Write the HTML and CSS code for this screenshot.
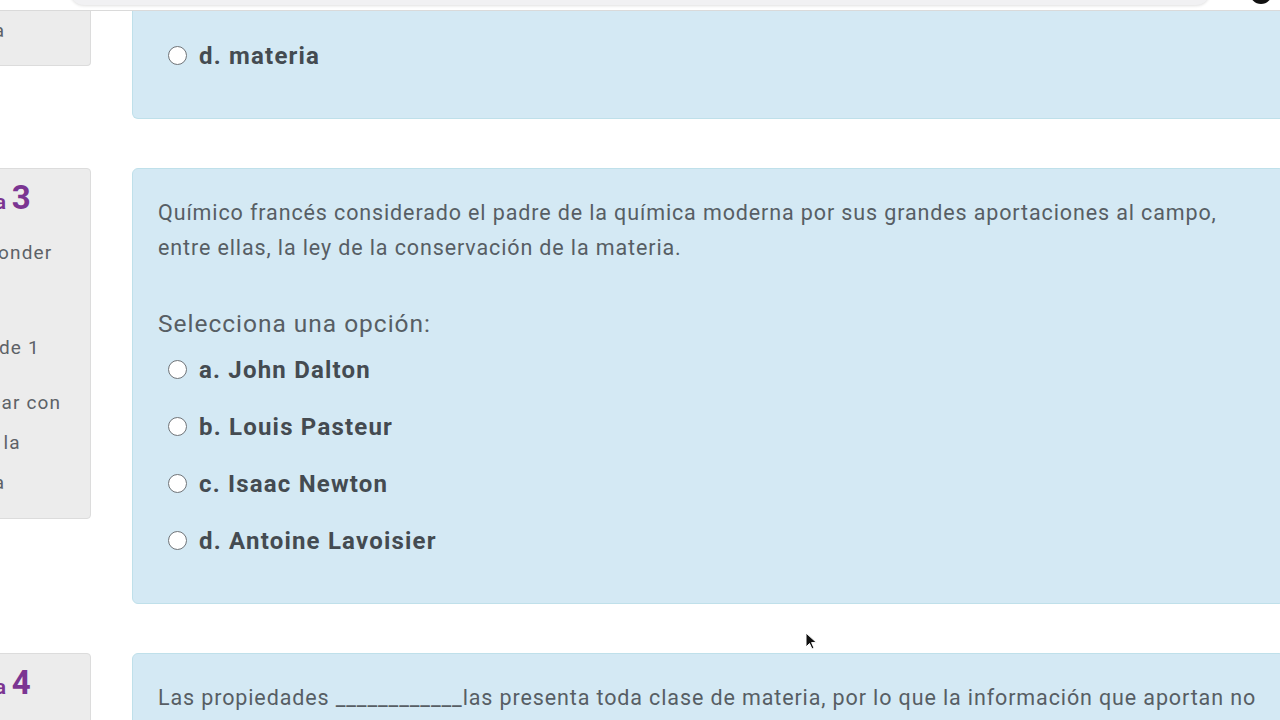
FILE: index.html
```html
<!DOCTYPE html>
<html>
<head>
  <title>Cuestionario</title>
  <link rel="stylesheet" href="styles.css">
</head>
<body>
  <!-- top bar, mostly scrolled away -->
  <header class="topbar">
    <div class="search"></div>
    <div class="avatar"></div>
  </header>

  <main class="quiz">
    <!-- question 2, only its tail is on screen -->
    <div class="que cut">
      <div class="info">
        <div class="line">pregunta</div>
      </div>
      <div class="content">
        <div class="answer">
          <label class="option"><span class="radio"></span><span class="label">d. materia</span></label>
        </div>
      </div>
    </div>

    <div class="que">
      <div class="info">
        <h3 class="no">Pregunta <span class="qno">3</span></h3>
        <div class="state">
          <div class="line">Sin responder</div>
          <div class="line">aún</div>
        </div>
        <div class="grade line">Puntaje de 1</div>
        <div class="flag">
          <div class="line"><span class="flag-icon">&#9873;</span> Marcar con</div>
          <div class="line">bandera la</div>
          <div class="line">pregunta</div>
        </div>
      </div>
      <div class="content">
        <p class="qtext">Químico francés considerado el padre de la química moderna por sus grandes aportaciones al campo, entre ellas, la ley de la conservación de la materia.</p>
        <div class="prompt">Selecciona una opción:</div>
        <div class="answer">
          <label class="option"><span class="radio"></span><span class="label">a. John Dalton</span></label>
          <label class="option"><span class="radio"></span><span class="label">b. Louis Pasteur</span></label>
          <label class="option"><span class="radio"></span><span class="label">c. Isaac Newton</span></label>
          <label class="option"><span class="radio"></span><span class="label">d. Antoine Lavoisier</span></label>
        </div>
      </div>
    </div>

    <div class="que">
      <div class="info">
        <h3 class="no">Pregunta <span class="qno">4</span></h3>
        <div class="state">
          <div class="line">Sin responder</div>
          <div class="line">aún</div>
        </div>
      </div>
      <div class="content">
        <p class="qtext">Las propiedades ____________las presenta toda clase de materia, por lo que la información que aportan no sirve para distinguir una sustancia de otra.</p>
      </div>
    </div>
  </main>

  <!-- mouse pointer caught in the screenshot -->
  <svg class="cursor" width="13" height="19" viewBox="0 0 13 19">
    <path d="M1 1 L1 15 L4.5 11.5 L7 17 L9 16 L6.6 10.6 L11.5 10.6 Z" fill="#111" stroke="#fff" stroke-width="1"/>
  </svg>
</body>
</html>
```

FILE: styles.css
```css
body {
  margin: 0;
  padding: 0;
  background: #fff;
  overflow: hidden;
  width: 1280px;
  height: 720px;
  font-family: Roboto, "Liberation Sans", sans-serif;
  color: #575e64;
}

/* Top bar */
.topbar {
  height: 10px;
  border-bottom: 1px solid #dadada;
  position: relative;
  overflow: hidden;
  display: flex;
  align-items: flex-end;
}

.search {
  margin-left: 70px;
  width: 1140px;
  height: 30px;
  margin-bottom: 5px;
  background: #f1f1f3;
  border-radius: 0 0 14px 14px;
  box-shadow: 0 1px 3px rgba(0, 0, 0, 0.12);
}

.avatar {
  margin-left: 40px;
  width: 22px;
  height: 22px;
  margin-bottom: 6px;
  border-radius: 50%;
  background: #111;
}

/* Questions */
.quiz {
  margin-left: -86px;
  width: 1371px;
}

.que {
  display: flex;
  align-items: flex-start;
  gap: 41px;
  margin-bottom: 49px;
}

.info {
  width: 177px;
  box-sizing: border-box;
  flex-shrink: 0;
  padding: 11px 10px 15px 6px;
  background: #ececec;
  border: 1px solid #dcdcdc;
  border-radius: 4px;
  font-size: 19px;
  letter-spacing: 0.06em;
  color: #5d6267;
  white-space: nowrap;
}

.line {
  line-height: 40px;
}

.no {
  margin: 0 0 13px;
  font-size: 20px;
  font-weight: 700;
  line-height: 36px;
  letter-spacing: 0.02em;
  color: #7b3592;
}

.qno {
  font-size: 33px;
}

.grade {
  margin-top: 15px;
}

.flag {
  margin-top: 15px;
}

.flag-icon {
  display: inline-block;
  width: 27px;
  color: #888;
}

.content {
  flex: 1;
  box-sizing: border-box;
  padding: 26px 26px 34px 25px;
  background: #d4e9f4;
  border: 1px solid #bfe0ea;
  border-radius: 6px;
}

.que.cut .info,
.que.cut .content {
  border-top: 0;
  border-top-left-radius: 0;
  border-top-right-radius: 0;
}

.que.cut .info {
  padding-top: 0;
  padding-bottom: 14px;
}

.que.cut .content {
  padding-top: 16px;
}

.qtext {
  margin: 0;
  font-size: 21.5px;
  line-height: 35px;
  letter-spacing: 0.041em;
}

.prompt {
  margin-top: 42px;
  font-size: 24.5px;
  line-height: 34px;
  letter-spacing: 0.04em;
}

.option {
  display: flex;
  align-items: center;
  height: 57px;
  padding-left: 10px;
  gap: 12px;
}

.radio {
  width: 17px;
  height: 17px;
  border: 1.5px solid #707478;
  border-radius: 50%;
  background: #fff;
}

.label {
  font-size: 24px;
  font-weight: 700;
  letter-spacing: 0.05em;
  color: #444b51;
}

.cursor {
  position: absolute;
  left: 805px;
  top: 632px;
}
```
